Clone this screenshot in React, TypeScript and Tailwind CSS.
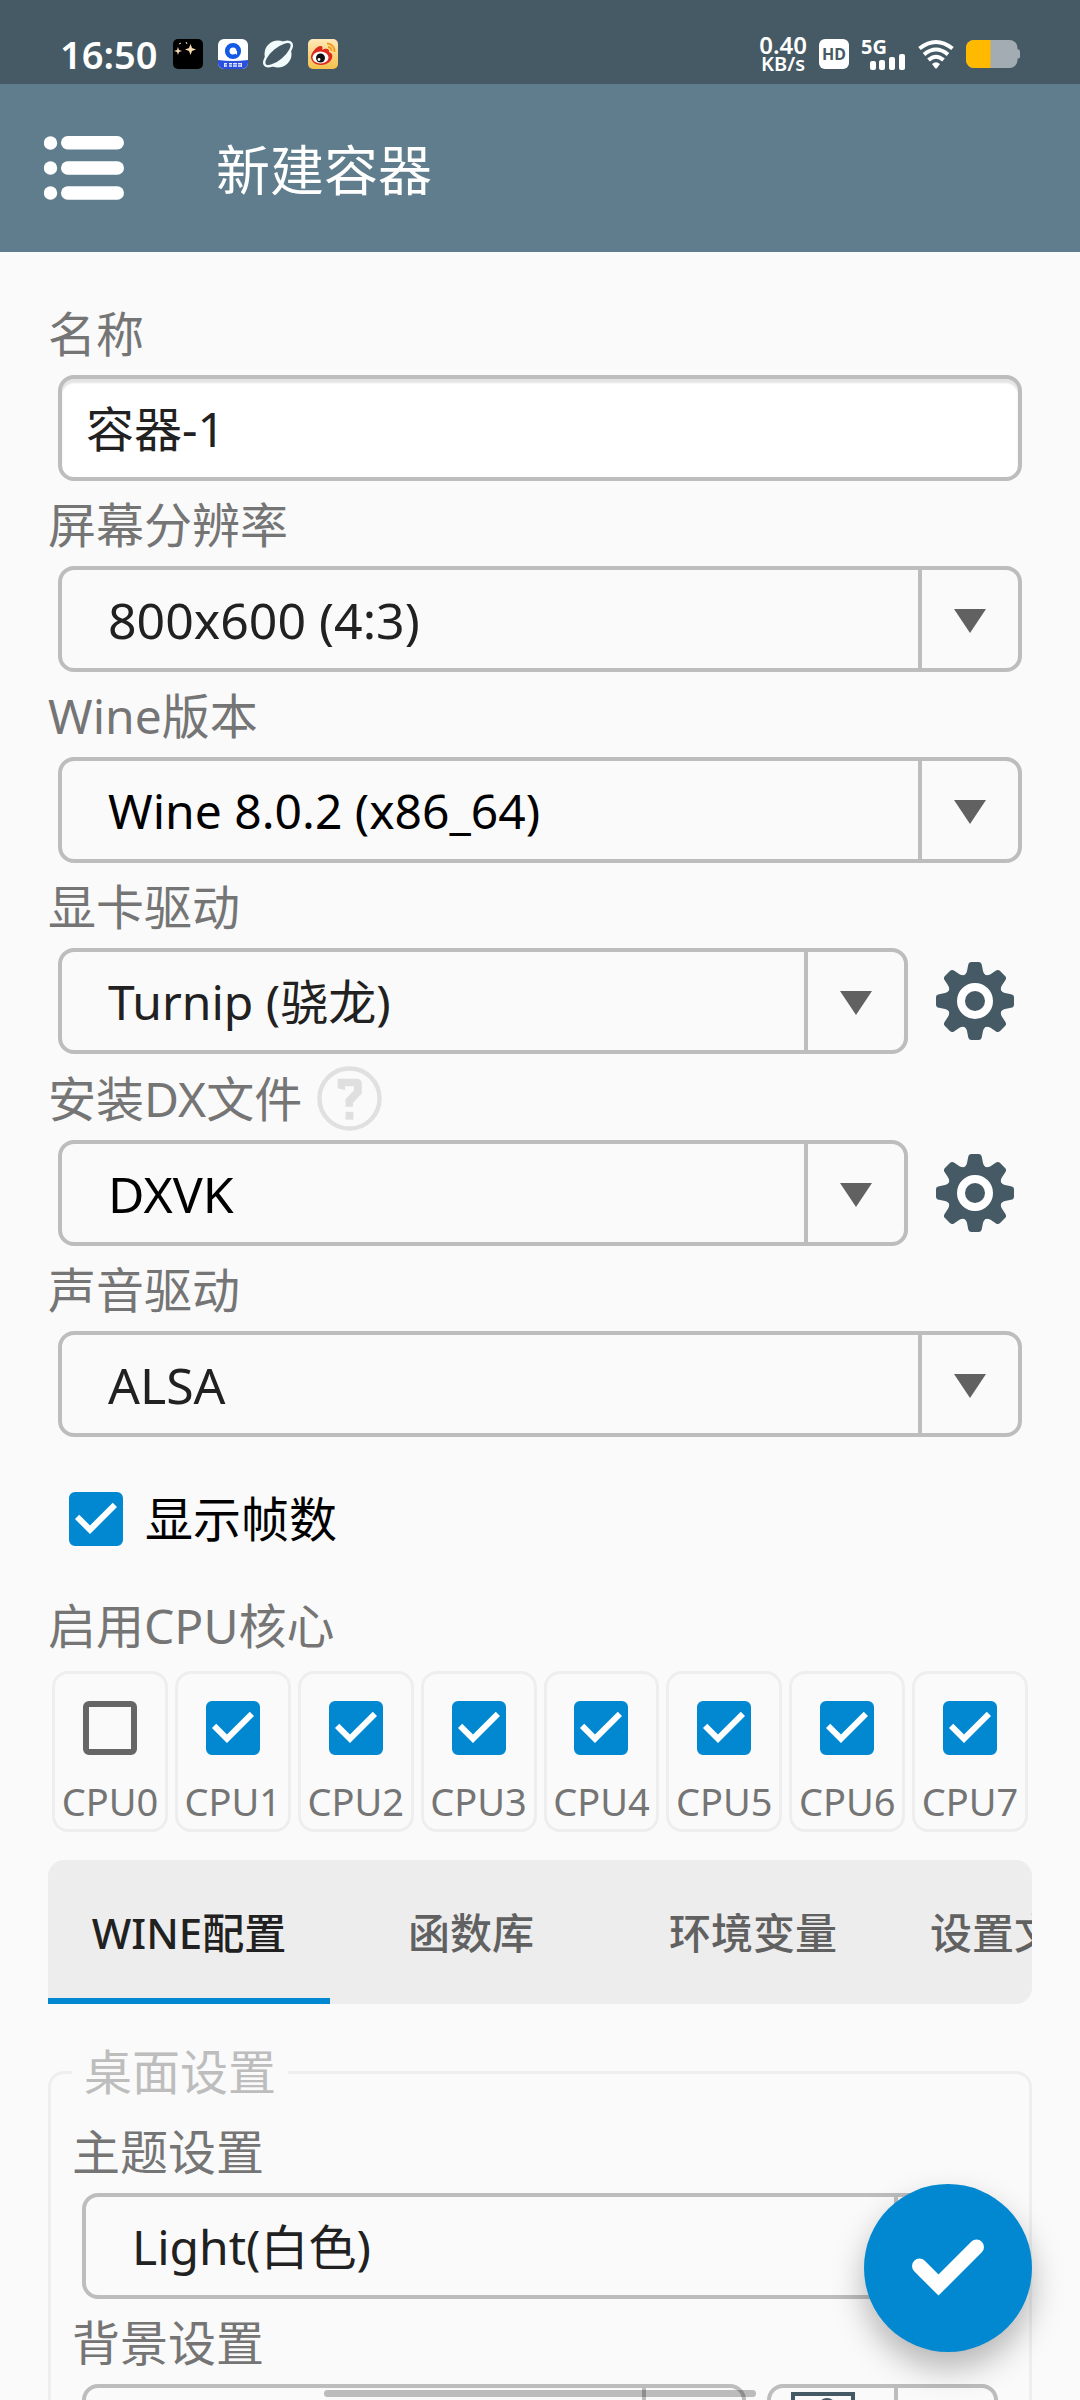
import { useState, ReactNode } from 'react';

interface SelectFieldProps {
  id: string;
  options: string[];
  className?: string;
}

interface FieldProps {
  id: string;
  label: string;
  extra?: ReactNode;
  children: ReactNode;
}

const TABS = ['WINE配置', '函数库', '环境变量', '设置文件夹'];
const CPU_CORES = [0, 1, 2, 3, 4, 5, 6, 7];
const GEAR_TEETH = [0, 45, 90, 135, 180, 225, 270, 315];

const SelectField: React.FC<SelectFieldProps> = ({
  id,
  options,
  className = 'text-[48px] text-[#212121]',
}) => (
  <div className="relative min-w-0 flex-1">
    <select
      id={id}
      className={`block h-[106px] w-full appearance-none rounded-2xl border-4 border-[#bdbdbd] bg-transparent pl-[46px] pr-[104px] pt-0.5 outline-none ${className}`}
    >
      {options.map((option) => (
        <option key={option}>{option}</option>
      ))}
    </select>
    <div className="pointer-events-none absolute inset-y-0 right-0 flex w-[104px] items-center justify-center border-l-4 border-[#bdbdbd] pr-1 pt-1">
      <svg width="32" height="24" viewBox="0 0 32 24">
        <path d="M0 0h32L16 24z" fill="#616161" />
      </svg>
    </div>
  </div>
);

const Field: React.FC<FieldProps> = ({ id, label, extra, children }) => (
  <div className="mb-3">
    <div className="mb-[9px] flex items-center gap-[15px]">
      <label htmlFor={id} className="text-[48px] leading-[64px] text-[#757575]">
        {label}
      </label>
      {extra}
    </div>
    <div className="mx-[10px] flex items-center">{children}</div>
  </div>
);

const CheckBox: React.FC<{ id: string; defaultChecked?: boolean }> = ({ id, defaultChecked }) => (
  <span className="relative block size-[54px] shrink-0">
    <input
      id={id}
      type="checkbox"
      defaultChecked={defaultChecked}
      className="peer block size-[54px] appearance-none rounded-md border-[6px] border-[#666666] checked:border-[#0288d1] checked:bg-[#0288d1]"
    />
    <svg
      viewBox="3 3 18 18"
      className="pointer-events-none absolute inset-0 hidden size-[54px] peer-checked:block"
    >
      <path d="M10 17l-5-5 1.41-1.41L10 14.17l7.59-7.59L19 8z" fill="#fff" />
    </svg>
  </span>
);

const GearButton: React.FC<{ label: string }> = ({ label }) => (
  <button type="button" aria-label={label} className="ml-7 mr-2 shrink-0">
    <svg width="78" height="78" viewBox="-39 -39 78 78" className="block">
      <g fill="#455a64">
        <circle r="28" />
        {GEAR_TEETH.map((angle) => (
          <path
            key={angle}
            transform={`rotate(${angle})`}
            d="M-13 -24Q-8.500 -27 -8 -30L-6.800 -36Q-6.300 -39 -3.500 -39H3.500Q6.300 -39 6.800 -36L8 -30Q8.500 -27 13 -24z"
          />
        ))}
      </g>
      <circle r="14" fill="none" stroke="#fff" strokeWidth="8" />
    </svg>
  </button>
);

const StatusBar: React.FC = () => (
  <div className="flex h-[84px] shrink-0 items-center justify-between bg-[#455a64] px-[60px] pt-6 text-white">
    <div className="flex items-center gap-4">
      <span className="text-[38px] font-semibold leading-[48px]">16:50</span>
      <div className="flex items-center gap-[15px]">
        <svg width="30" height="30" viewBox="0 0 30 30">
          <rect width="30" height="30" rx="5" fill="#000" />
          <path d="M17.500 5l1.500 4 4 1.500-4 1.500-1.500 4-1.500-4-4-1.500 4-1.500z" fill="#f6d9b0" />
          <path d="M5 8l1 3 3 1-3 1-1 3-1-3-3-1 3-1z" fill="#f6d9b0" />
          <path d="M6 5l2-1M13 3l1 2" stroke="#f6d9b0" strokeWidth="1" />
        </svg>
        <svg width="30" height="30" viewBox="0 0 30 30">
          <rect width="30" height="30" rx="6" fill="#fff" />
          <path d="M0 21q15 2 30 0v3a6 6 0 0 1-6 6H6a6 6 0 0 1-6-6z" fill="#2b50e0" />
          <circle cx="15" cy="12" r="5.800" fill="none" stroke="#1259e6" strokeWidth="4.600" />
          <path d="M15 12h4v4z" fill="#fff" />
          <path d="M6 24h3v4H6zm5 0h3v4h-3zm4 0h4v4h-4zm5 0h4v4h-4z" fill="#dfe6ff" />
          <path d="M7 25.500h16M7 27h16" stroke="#2b50e0" strokeWidth=".5" />
        </svg>
        <svg width="30" height="30" viewBox="0 0 30 30">
          <circle cx="15" cy="15" r="13.500" fill="#f2fbfc" />
          <ellipse
            cx="15"
            cy="15"
            rx="17"
            ry="7"
            transform="rotate(-40 15 15)"
            fill="#455a64"
            stroke="#f2fbfc"
            strokeWidth="2.400"
          />
        </svg>
        <svg width="30" height="30" viewBox="0 0 30 30">
          <defs>
            <linearGradient id="weibo-bg" x1="0" y1="0" x2="0" y2="1">
              <stop offset="0" stopColor="#ffe9b8" />
              <stop offset="1" stopColor="#f6c14b" />
            </linearGradient>
          </defs>
          <rect width="30" height="30" rx="5" fill="url(#weibo-bg)" />
          <path
            d="M3 18c0-4 5-10 9-11 3 0 3 2 2 4 3-2 8-2 7 2 3 1 4 3 3 6-1 4-6 7-11 7S3 23 3 18z"
            fill="#dc2a1c"
          />
          <ellipse cx="12.500" cy="18.500" rx="8" ry="6" fill="#fff" />
          <circle cx="12.500" cy="19" r="4.500" fill="#111" />
          <circle cx="11" cy="20.500" r="1.400" fill="#fff" />
          <path
            d="M19 4.500a7.500 7.500 0 0 1 7.500 8.500M20 8a4 4 0 0 1 3.500 4"
            fill="none"
            stroke="#f09a1f"
            strokeWidth="1.800"
          />
        </svg>
      </div>
    </div>
    <div className="flex items-center gap-3">
      <div className="flex flex-col items-center font-semibold">
        <span className="text-[24px] leading-[20px]">0.40</span>
        <span className="text-[20px] leading-[18px]">KB/s</span>
      </div>
      <span className="flex size-[30px] items-center justify-center rounded-md bg-white text-[16px] font-bold leading-[16px] text-[#455a64]">
        HD
      </span>
      <div className="flex w-[45px] flex-col">
        <span className="text-[20px] font-bold leading-[15px]">5G</span>
        <svg width="36" height="16" viewBox="0 0 36 16" className="self-end">
          <g fill="#fff">
            <rect x="0" y="7" width="6" height="9" rx="2" />
            <rect x="9" y="6" width="6" height="10" rx="2" />
            <rect x="19" y="3" width="6" height="13" rx="2" />
            <rect x="29" y="0" width="6" height="16" rx="2" />
          </g>
        </svg>
      </div>
      <svg width="36" height="30" viewBox="0 0 36 30">
        <g fill="none" stroke="#fff" strokeWidth="4">
          <path d="M1.500 9.500Q18 -3.500 34.500 9.500" />
          <path d="M6 15.500Q18 5.500 30 15.500" />
          <path d="M10.500 21Q18 14.500 25.500 21" />
        </g>
        <path d="M14 25q4-3.500 8 0l-3 4q-1 1-2 0z" fill="#fff" />
      </svg>
      <svg width="54" height="28" viewBox="0 0 54 28">
        <path d="M51 9.500h1.500q1.500 0 1.500 2v5q0 2-1.500 2H51z" fill="#a3abb3" />
        <rect width="51.500" height="28" rx="8" fill="#a3abb3" />
        <path d="M8 0h16.500v28H8a8 8 0 0 1-8-8V8a8 8 0 0 1 8-8z" fill="#ffba00" />
      </svg>
    </div>
  </div>
);

const App: React.FC = () => {
  const [name, setName] = useState<string>('容器-1');
  const [activeTab, setActiveTab] = useState<number>(0);

  return (
    <div className="relative flex h-screen flex-col overflow-hidden bg-[#fafafa] font-['Noto_Sans','Noto_Sans_CJK_SC',sans-serif]">
      <StatusBar />
      <header className="flex h-[168px] shrink-0 items-center bg-[#5f7d8c] pl-11 text-white">
        <button type="button" aria-label="菜单">
          <svg width="80" height="64" viewBox="0 0 80 64" className="block">
            <g fill="#fff">
              <circle cx="6.500" cy="7" r="6.700" />
              <circle cx="6.500" cy="32" r="6.700" />
              <circle cx="6.500" cy="57" r="6.700" />
              <rect x="17" y="0" width="63" height="13.500" rx="6.700" />
              <rect x="17" y="25.200" width="63" height="13.500" rx="6.700" />
              <rect x="17" y="50.300" width="63" height="13.500" rx="6.700" />
            </g>
          </svg>
        </button>
        <h1 className="ml-[92px] pt-1 text-[54px] leading-[72px]">新建容器</h1>
      </header>

      <main className="min-h-0 flex-1 overflow-y-auto px-12 pt-[50px] [scrollbar-width:none]">
        <Field id="name" label="名称">
          <input
            id="name"
            type="text"
            value={name}
            onChange={(event) => setName(event.target.value)}
            className="h-[106px] w-full rounded-2xl border-4 border-[#bdbdbd] bg-white px-6 pb-1 text-[48px] text-[#212121] shadow-[inset_0_4px_2px_#e4e4e4] outline-none"
          />
        </Field>
        <Field id="screen-size" label="屏幕分辨率">
          <SelectField
            id="screen-size"
            options={['800x600 (4:3)', '1024x768 (4:3)', '1280x720 (16:9)']}
            className="text-[50px] text-[#212121]"
          />
        </Field>
        <Field id="wine-version" label="Wine版本">
          <SelectField
            id="wine-version"
            options={['Wine 8.0.2 (x86_64)']}
            className="text-[48px] text-black"
          />
        </Field>
        <Field id="graphics-driver" label="显卡驱动">
          <SelectField id="graphics-driver" options={['Turnip (骁龙)', 'VirGL']} />
          <GearButton label="显卡驱动设置" />
        </Field>
        <Field
          id="dx-wrapper"
          label="安装DX文件"
          extra={
            <button type="button" aria-label="帮助">
              <svg width="65" height="65" viewBox="0 0 66 66" className="block">
                <circle cx="33" cy="33" r="30.500" fill="none" stroke="#e0e0e0" strokeWidth="4.500" />
                <path
                  d="M21 13H40Q45.500 13 45.500 18V28L36.500 37.500V41.500H29V33.500L37.500 25V20.500H28.500V24.500L21 22.500z"
                  fill="#dfdfdf"
                />
                <rect x="29" y="46.500" width="8" height="8" fill="#dfdfdf" />
              </svg>
            </button>
          }
        >
          <SelectField
            id="dx-wrapper"
            options={['DXVK', 'WineD3D', 'CNC DDraw']}
            className="text-[50px] text-black"
          />
          <GearButton label="DX设置" />
        </Field>
        <Field id="audio-driver" label="声音驱动">
          <SelectField
            id="audio-driver"
            options={['ALSA', 'PulseAudio']}
            className="text-[50px] text-[#212121]"
          />
        </Field>

        <div className="mb-[27px] mt-[34px] flex h-24 items-center gap-[22px] pl-[21px]">
          <CheckBox id="show-fps" defaultChecked />
          <label htmlFor="show-fps" className="text-[48px] leading-[64px] text-black">
            显示帧数
          </label>
        </div>

        <h2 className="mb-[13px] text-[48px] leading-[64px] text-[#757575]">启用CPU核心</h2>
        <div className="mx-1 grid grid-cols-8 gap-[7px]">
          {CPU_CORES.map((core) => (
            <div
              key={core}
              className="flex flex-col items-center gap-[22px] rounded-2xl border-[3px] border-[#eeeeee] pb-1 pt-[27px]"
            >
              <CheckBox id={`cpu-${core}`} defaultChecked={core !== 0} />
              <label htmlFor={`cpu-${core}`} className="text-[38px] leading-[48px] text-[#757575]">
                CPU{core}
              </label>
            </div>
          ))}
        </div>

        <div role="tablist" className="mt-7 flex h-36 overflow-hidden rounded-2xl rounded-bl-none bg-[#ededed]">
          {TABS.map((tab, index) => (
            <button
              key={tab}
              type="button"
              role="tab"
              aria-selected={index === activeTab}
              onClick={() => setActiveTab(index)}
              className={`w-[282px] shrink-0 whitespace-nowrap border-y-[6px] border-t-transparent text-[42px] font-medium ${
                index === activeTab
                  ? 'border-b-[#0288d1] text-[#212121]'
                  : 'border-b-transparent text-[#616161]'
              }`}
            >
              {tab}
            </button>
          ))}
        </div>

        <fieldset className="mt-9 rounded-2xl border-[3px] border-[#eeeeee] px-[21px]">
          <legend className="px-3 text-[48px] leading-[64px] text-[#bdbdbd]">桌面设置</legend>
          <div className="pt-4">
            <Field id="desktop-theme" label="主题设置">
              <SelectField id="desktop-theme" options={['Light(白色)', 'Dark(黑色)']} />
            </Field>
            <Field id="desktop-background" label="背景设置">
              <SelectField id="desktop-background" options={['图片', '颜色']} />
              <button
                type="button"
                aria-label="选择图片"
                className="ml-[21px] flex h-[106px] w-[231px] shrink-0 rounded-2xl border-4 border-[#bdbdbd]"
              >
                <span className="flex h-full flex-1 items-start border-r-4 border-[#bdbdbd] pl-5 pt-1">
                  <svg width="64" height="80" viewBox="0 0 64 80">
                    <rect x="2" y="2" width="60" height="76" fill="none" stroke="#455a64" strokeWidth="4" />
                    <circle cx="36" cy="15" r="9" fill="#455a64" />
                    <path d="M10 68l16-26 12 16 8-8 10 18z" fill="#455a64" />
                  </svg>
                </span>
                <span className="flex h-full w-24 items-center justify-center">
                  <svg width="32" height="24" viewBox="0 0 32 24">
                    <path d="M0 0h32L16 24z" fill="#616161" />
                  </svg>
                </span>
              </button>
            </Field>
          </div>
        </fieldset>
      </main>

      <button
        type="button"
        aria-label="确定"
        className="absolute bottom-12 right-12 flex size-[168px] items-center justify-center rounded-full bg-[#0288d1] shadow-[0_16px_32px_rgba(0,0,0,0.28)]"
      >
        <svg width="72" height="72" viewBox="0 0 72 72">
          <path d="M7.500 34L26.500 53L64.500 15" fill="none" stroke="#fff" strokeWidth="15" strokeLinecap="round" />
        </svg>
      </button>
      <div className="pointer-events-none absolute inset-x-0 bottom-[3px] mx-auto h-[7px] w-2/5 rounded-full bg-black/25" />
    </div>
  );
};

export default App;
